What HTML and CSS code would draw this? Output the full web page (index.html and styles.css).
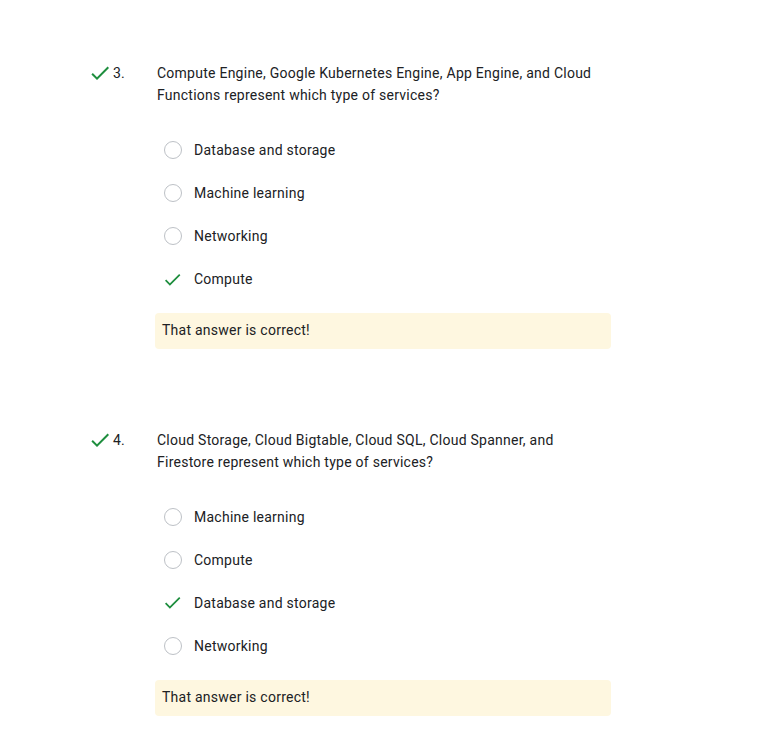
FILE: index.html
```html
<!DOCTYPE html>
<html>
<head>
<meta charset="utf-8">
<link rel="stylesheet" href="styles.css">
</head>
<body>
<div class="page">
  <section class="question">
    <div class="qhead">
      <svg class="qcheck" viewBox="0 0 24 24" width="24" height="24"><path d="M9 16.17L4.83 12l-1.42 1.41L9 19 21 7l-1.41-1.41z" fill="#1e8e3e"/></svg>
      <span class="qnum">3.</span>
      <p class="qtext">Compute Engine, Google Kubernetes Engine, App Engine, and Cloud Functions represent which type of services?</p>
    </div>
    <ul class="options">
      <li class="option"><span class="slot"><span class="radio"></span></span><span>Database and storage</span></li>
      <li class="option"><span class="slot"><span class="radio"></span></span><span>Machine learning</span></li>
      <li class="option"><span class="slot"><span class="radio"></span></span><span>Networking</span></li>
      <li class="option"><span class="slot"><svg class="ocheck" viewBox="0 0 24 24" width="21" height="21"><path d="M9 16.17L4.83 12l-1.42 1.41L9 19 21 7l-1.41-1.41z" fill="#1e8e3e"/></svg></span><span>Compute</span></li>
    </ul>
    <div class="feedback">That answer is correct!</div>
  </section>

  <section class="question">
    <div class="qhead">
      <svg class="qcheck" viewBox="0 0 24 24" width="24" height="24"><path d="M9 16.17L4.83 12l-1.42 1.41L9 19 21 7l-1.41-1.41z" fill="#1e8e3e"/></svg>
      <span class="qnum">4.</span>
      <p class="qtext">Cloud Storage, Cloud Bigtable, Cloud SQL, Cloud Spanner, and Firestore represent which type of services?</p>
    </div>
    <ul class="options">
      <li class="option"><span class="slot"><span class="radio"></span></span><span>Machine learning</span></li>
      <li class="option"><span class="slot"><span class="radio"></span></span><span>Compute</span></li>
      <li class="option"><span class="slot"><svg class="ocheck" viewBox="0 0 24 24" width="21" height="21"><path d="M9 16.17L4.83 12l-1.42 1.41L9 19 21 7l-1.41-1.41z" fill="#1e8e3e"/></svg></span><span>Database and storage</span></li>
      <li class="option"><span class="slot"><span class="radio"></span></span><span>Networking</span></li>
    </ul>
    <div class="feedback">That answer is correct!</div>
  </section>
</div>
</body>
</html>
```

FILE: styles.css
```css
* { box-sizing: border-box; }
html, body { margin: 0; padding: 0; background: #fff; }
body {
  font-family: Roboto, "Liberation Sans", Arial, sans-serif;
  font-size: 14px;
  line-height: 22px;
  letter-spacing: 0.25px;
  color: #202124;
}
.page {
  padding: 62px 0 0 88px;
  display: flex;
  flex-direction: column;
  gap: 80px;
}
.qhead {
  display: flex;
  align-items: flex-start;
}
.qcheck {
  flex: none;
  margin-top: -1px;
}
.qnum {
  flex: none;
  width: 45px;
  padding-left: 1px;
}
.qtext {
  margin: 0;
  width: 454px;
}
.options {
  list-style: none;
  margin: 22px 0 0 76px;
  padding: 0;
}
.option {
  display: flex;
  align-items: center;
  height: 43px;
  gap: 10px;
}
.option:last-child {
  padding-top: 1px;
}
.slot {
  flex: none;
  width: 20px;
  height: 20px;
  display: flex;
  align-items: center;
}
.radio {
  width: 18px;
  height: 18px;
  border: 1px solid #bdc1c6;
  border-radius: 50%;
}
.ocheck {
  margin-left: -2px;
  flex: none;
}
.feedback {
  margin: 13px 0 0 67px;
  width: 456px;
  height: 36px;
  line-height: 34px;
  padding: 0 7px;
  background: #fef7e0;
  border-radius: 4px;
}
```
